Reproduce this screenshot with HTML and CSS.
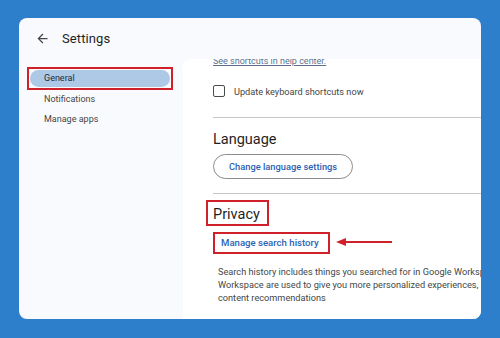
FILE: index.html
```html
<!DOCTYPE html>
<html lang="en">
<head>
<meta charset="utf-8">
<title>Settings</title>
<link rel="stylesheet" href="styles.css">
</head>
<body>
<div class="window">
  <header class="topbar">
    <svg class="back" viewBox="0 0 24 24" width="15" height="15" aria-hidden="true"><path d="M20 11H7.83l5.59-5.59L12 4l-8 8 8 8 1.41-1.41L7.83 13H20v-2z" fill="#444746"/></svg>
    <span class="title">Settings</span>
  </header>
  <div class="body">
    <nav class="sidebar">
      <div class="nav-item active">General</div>
      <div class="nav-item">Notifications</div>
      <div class="nav-item">Manage apps</div>
    </nav>
    <main class="panel">
      <div class="content">
        <a class="help-link" href="#">See shortcuts in help center.</a>
        <label class="check-row"><span class="checkbox"></span><span>Update keyboard shortcuts now</span></label>
        <hr class="divider">
        <section class="section">
          <h2 class="heading">Language</h2>
          <button class="outline-btn">Change language settings</button>
        </section>
        <hr class="divider divider-2">
        <section class="section">
          <h2 class="heading heading-marked">Privacy</h2>
          <div class="link-row">
            <a class="history-link" href="#">Manage search history</a>
            <svg class="red-arrow" width="56" height="10" viewBox="0 0 56 10" aria-hidden="true"><path d="M0 5 L10 1 L10 9 Z" fill="#d0212a"/><rect x="9" y="4" width="47" height="2" fill="#d0212a"/></svg>
          </div>
          <p class="desc">Search history includes things you searched for in Google Workspace. Searches you do in Google<br>Workspace are used to give you more personalized experiences, including faster searches and more helpful<br>content recommendations</p>
        </section>
      </div>
    </main>
  </div>
</div>
</body>
</html>
```

FILE: styles.css
```css
* { box-sizing: border-box; }
html, body { margin: 0; padding: 0; }
body {
  background: #2e7fcb;
  font-family: Roboto, "Liberation Sans", Arial, sans-serif;
  color: #444746;
  width: 500px;
  height: 338px;
  overflow: hidden;
  padding: 18px 0 0 19px;
}
.window {
  width: 462px;
  height: 301px;
  background: #f8fafd;
  border-radius: 8px;
  overflow: hidden;
  display: flex;
  flex-direction: column;
}
.topbar {
  height: 41px;
  flex: none;
  display: flex;
  align-items: center;
  padding-left: 16px;
  gap: 12px;
}
.back { display: block; }
.title {
  font-size: 13px;
  color: #1f1f1f;
  letter-spacing: 0.1px;
}
.body {
  flex: 1;
  display: flex;
  min-height: 0;
}
.sidebar {
  width: 164px;
  flex: none;
  padding: 11px 0 0 11px;
  display: flex;
  flex-direction: column;
  gap: 3.5px;
}
.nav-item {
  width: 140px;
  height: 17px;
  line-height: 17px;
  padding-left: 14px;
  font-size: 9px;
  color: #444746;
  border-radius: 9px;
  position: relative;
}
.nav-item.active {
  background: #adc9e6;
  color: #1d2b3b;
}
.nav-item.active::after {
  content: "";
  position: absolute;
  inset: -3px;
  border: 2px solid #d0212a;
}
.panel {
  flex: 1;
  background: #ffffff;
  border-top-left-radius: 8px;
  overflow: hidden;
  padding-left: 30px;
}
.content {
  width: 420px;
  display: flex;
  flex-direction: column;
  align-items: flex-start;
}
.help-link {
  display: block;
  margin-top: -4px;
  line-height: 13px;
  font-size: 9px;
  color: #5a6f8c;
  text-decoration: underline;
}
.check-row {
  margin-top: 17px;
  display: flex;
  align-items: center;
  gap: 9px;
  height: 12px;
  font-size: 9.2px;
  color: #444746;
}
.checkbox {
  width: 12px;
  height: 12px;
  border: 1.5px solid #4a4a4a;
  border-radius: 2px;
  flex: none;
}
.divider {
  align-self: stretch;
  margin: 20px 0 0 0;
  border: 0;
  border-top: 1px solid #c4c7c5;
  height: 0;
}
.divider-2 { margin-top: 14px; }
.section {
  display: flex;
  flex-direction: column;
  align-items: flex-start;
}
.heading {
  margin: 12px 0 0 0;
  font-size: 14.5px;
  font-weight: 400;
  line-height: 20px;
  color: #1f1f1f;
}
.outline-btn {
  margin-top: 4px;
  height: 25px;
  padding: 0 15px;
  border: 1px solid #8a8d8b;
  border-radius: 13px;
  background: #ffffff;
  font-family: inherit;
  font-size: 9.3px;
  font-weight: 500;
  color: #2b5fb0;
}
.heading-marked {
  margin: 6px 0 0 -7px;
  height: 26px;
  line-height: 19px;
  border: 2px solid #d0212a;
  padding: 3px 7px 0 5px;
}
.link-row {
  margin-top: 6px;
  display: flex;
  align-items: center;
}
.history-link {
  height: 22px;
  line-height: 18px;
  border: 2px solid #d0212a;
  padding: 0 9px 0 6px;
  font-size: 9.6px;
  font-weight: 500;
  color: #2b63b5;
  text-decoration: none;
}
.red-arrow {
  display: block;
  margin: 0 0 3px 6px;
}
.desc {
  margin: 11px 0 0 5px;
  font-size: 9.2px;
  line-height: 13px;
  white-space: nowrap;
  color: #444746;
}
```
